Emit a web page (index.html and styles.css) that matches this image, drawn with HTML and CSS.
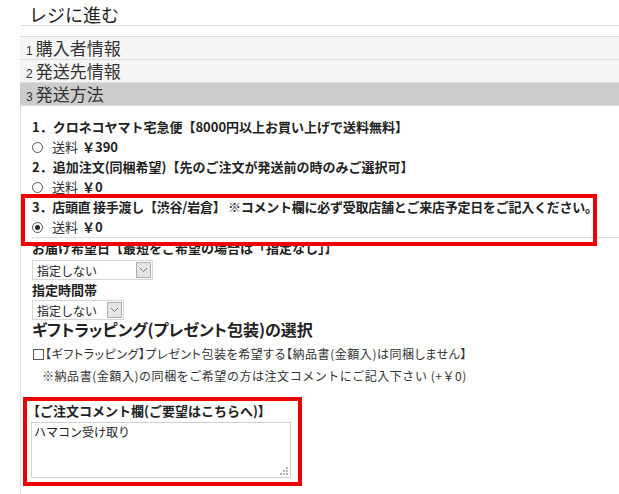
FILE: index.html
```html
<!DOCTYPE html>
<html lang="ja">
<head>
<meta charset="utf-8">
<title>レジに進む</title>
<link rel="stylesheet" href="styles.css">
</head>
<body>
<div class="page">
  <h1 class="title">レジに進む</h1>
  <div class="steps">
    <div class="step"><span class="num">1</span>購入者情報</div>
    <div class="step"><span class="num">2</span>発送先情報</div>
    <div class="step active"><span class="num">3</span>発送方法</div>
  </div>
  <div class="content">
    <div class="methods">
      <div class="method-title">1．クロネコヤマト宅急便【8000円以上お買い上げで送料無料】</div>
      <div class="radio-row"><span class="radio"></span>送料 <b>￥390</b></div>
      <div class="method-title">2．追加注文(同梱希望)【先のご注文が発送前の時のみご選択可】</div>
      <div class="radio-row"><span class="radio"></span>送料 <b>￥0</b></div>
      <div class="method-title tight">3．店頭直 接手渡し【渋谷/岩倉】 ※コメント欄に必ず受取店舗とご来店予定日をご記入ください。</div>
      <div class="radio-row"><span class="radio checked"></span>送料 <b>￥0</b></div>
    </div>
    <div class="highlight"></div>

    <div class="field-label">お届け希望日【最短をご希望の場合は「指定なし」】</div>
    <div class="select select-date"><span class="select-text">指定しない</span><span class="select-arrow"><svg width="9" height="6" viewBox="0 0 9 6"><path d="M1 1 L4.5 4.5 L8 1" fill="none" stroke="#777" stroke-width="1"/></svg></span></div>
    <div class="field-label">指定時間帯</div>
    <div class="select select-time"><span class="select-text">指定しない</span><span class="select-arrow"><svg width="9" height="6" viewBox="0 0 9 6"><path d="M1 1 L4.5 4.5 L8 1" fill="none" stroke="#777" stroke-width="1"/></svg></span></div>

    <h2 class="gift-title">ギフトラッピング(プレゼント包装)の選択</h2>
    <div class="check-row"><span class="checkbox"></span>【ギフトラッピング】プレゼント包装を希望する【納品書(金額入)は同梱しません】</div>
    <div class="note">※納品書(金額入)の同梱をご希望の方は注文コメントにご記入下さい (+￥0)</div>

    <div class="comment-box">
      <div class="comment-label">【ご注文コメント欄(ご要望はこちらへ)】</div>
      <div class="textarea">ハマコン受け取り<svg class="grip" width="8" height="8" viewBox="0 0 8 8"><rect x="6" y="0" width="2" height="2" fill="#b5b5b5"/><rect x="3" y="3" width="2" height="2" fill="#b5b5b5"/><rect x="6" y="3" width="2" height="2" fill="#b5b5b5"/><rect x="0" y="6" width="2" height="2" fill="#b5b5b5"/><rect x="3" y="6" width="2" height="2" fill="#b5b5b5"/><rect x="6" y="6" width="2" height="2" fill="#b5b5b5"/></svg></div>
    </div>
  </div>
</div>
</body>
</html>
```
FILE: styles.css
```css
html, body {
  margin: 0;
  padding: 0;
  background: #fff;
}
body {
  font-family: "Noto Sans CJK JP", "Noto Sans", sans-serif;
  color: #333;
}
.page {
  padding-left: 20px;
}
.title {
  margin: 0;
  padding: 3px 0 0 9px;
  height: 22px;
  line-height: 22px;
  font-size: 18px;
  font-weight: normal;
  color: #222;
  border-bottom: 1px solid #ddd;
}
.steps {
  margin-top: 10px;
  border-top: 1px solid #ddd;
}
.step {
  height: 22px;
  line-height: 22px;
  padding-left: 6px;
  font-size: 17px;
  color: #333;
  background: #f5f5f5;
  border-bottom: 1px solid #ddd;
}
.step.active {
  background: #cccccc;
}
.num {
  font-size: 12px;
  margin-right: 3px;
  font-family: "Liberation Sans", sans-serif;
}
.content {
  position: relative;
  border-left: 1px solid #ddd;
  padding: 11px 0 12px 11px;
  font-size: 13px;
}
.methods {
  border-bottom: 1px solid #ddd;
}
.method-title {
  font-weight: bold;
  line-height: 20px;
  color: #222;
  white-space: nowrap;
}
.method-title.tight {
  letter-spacing: -0.25px;
}
.radio-row {
  line-height: 20px;
  display: flex;
  align-items: center;
  color: #333;
}
.radio-row b {
  margin-left: 4px;
  color: #222;
}
.radio {
  width: 11px;
  height: 11px;
  box-sizing: border-box;
  border: 1px solid #555;
  border-radius: 50%;
  margin-right: 9px;
  display: flex;
  align-items: center;
  justify-content: center;
}
.radio.checked::after {
  content: "";
  width: 5px;
  height: 5px;
  border-radius: 50%;
  background: #222;
}
.highlight {
  position: absolute;
  left: 0;
  top: 88px;
  width: 576px;
  height: 52px;
  box-sizing: border-box;
  border: 4px solid #ee0000;
}
.field-label {
  font-weight: bold;
  line-height: 20px;
  color: #222;
}
.select {
  display: flex;
  align-items: center;
  justify-content: space-between;
  height: 20px;
  box-sizing: border-box;
  border: 1px solid #d6d6d6;
  margin-top: 2px;
  font-size: 12px;
  color: #222;
}
.select-date { width: 121px; }
.select-time { width: 92px; margin-top: 0; }
.select-text {
  padding-left: 4px;
}
.select-arrow {
  width: 15px;
  height: 16px;
  box-sizing: border-box;
  border: 1px solid #adadad;
  background: #e5e5e5;
  margin-right: 1px;
  display: flex;
  align-items: center;
  justify-content: center;
}
.gift-title {
  margin: 0;
  font-size: 16px;
  line-height: 18px;
  font-weight: bold;
  color: #222;
  font-feature-settings: "palt";
}
.check-row {
  margin-top: 5px;
  line-height: 22px;
  display: flex;
  align-items: center;
  font-size: 12px;
  color: #333;
  white-space: nowrap;
  font-feature-settings: "palt";
  letter-spacing: 0.55px;
}
.checkbox {
  width: 11px;
  height: 11px;
  box-sizing: border-box;
  border: 1px solid #555;
  margin: 0 1px 0 1px;
}
.note {
  line-height: 22px;
  padding-left: 10px;
  font-size: 12px;
  color: #333;
  white-space: nowrap;
  letter-spacing: 0.55px;
}
.comment-box {
  margin: 10px 0 0 -9px;
  width: 279px;
  box-sizing: border-box;
  border: 4px solid #ee0000;
  padding: 0 0 4px 0;
}
.comment-label {
  font-weight: bold;
  line-height: 20px;
  color: #222;
  white-space: nowrap;
}
.textarea {
  position: relative;
  margin: 1px 0 0 4px;
  width: 260px;
  height: 56px;
  box-sizing: border-box;
  border: 1px solid #d0d0d0;
  padding: 1px 2px;
  font-size: 12px;
  line-height: 16px;
  color: #222;
}
.grip {
  position: absolute;
  right: 2px;
  bottom: 2px;
}
```
